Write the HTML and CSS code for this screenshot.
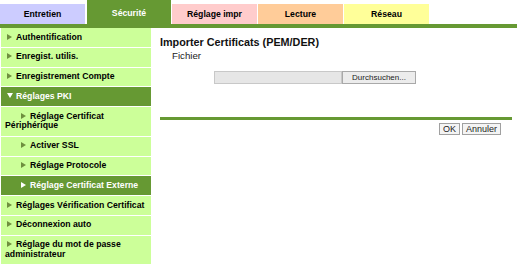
FILE: index.html
```html
<!DOCTYPE html>
<html lang="fr">
<head>
  <meta charset="UTF-8" />
  <title>Sécurité - Importer Certificats</title>
  <link rel="stylesheet" href="styles.css">
</head>
<body>
  <div class="tabs">
    <div class="tab tab-entretien">Entretien</div>
    <div class="tab tab-securite">Sécurité</div>
    <div class="tab tab-impr">Réglage impr</div>
    <div class="tab tab-lecture">Lecture</div>
    <div class="tab tab-reseau">Réseau</div>
  </div>
  <div class="band"></div>

  <div class="layout">
    <nav class="menu">
      <div class="item"><span class="arrow"></span>Authentification</div>
      <div class="item"><span class="arrow"></span>Enregist. utilis.</div>
      <div class="item"><span class="arrow"></span>Enregistrement Compte</div>
      <div class="item open"><span class="arrow-down"></span>Réglages PKI</div>
      <div class="item sub"><span class="arrow"></span>Réglage Certificat Périphérique</div>
      <div class="item sub"><span class="arrow"></span>Activer SSL</div>
      <div class="item sub"><span class="arrow"></span>Réglage Protocole</div>
      <div class="item sub current"><span class="arrow"></span>Réglage Certificat Externe</div>
      <div class="item"><span class="arrow"></span>Réglages Vérification Certificat</div>
      <div class="item"><span class="arrow"></span>Déconnexion auto</div>
      <div class="item"><span class="arrow"></span>Réglage du mot de passe administrateur</div>
    </nav>

    <main class="content">
      <h1 class="title">Importer Certificats (PEM/DER)</h1>
      <div class="label">Fichier</div>
      <div class="file-row">
        <div class="file-box"></div>
        <button class="browse">Durchsuchen...</button>
      </div>
      <div class="rule"></div>
      <div class="actions">
        <button class="btn">OK</button>
        <button class="btn">Annuler</button>
      </div>
    </main>
  </div>
</body>
</html>
```

FILE: styles.css
```css
body {
  margin: 0;
  font-family: 'Liberation Sans', Arial, sans-serif;
  background: #fff;
  color: #000;
}

/* tabs */
.tabs {
  display: flex;
  align-items: flex-end;
  gap: 1px;
  height: 24px;
}

.tab {
  width: 85px;
  height: 20px;
  line-height: 20px;
  text-align: center;
  font-size: 8.7px;
  font-weight: bold;
}

.tab-entretien { background: #ccccff; }
.tab-securite  { background: #669933; color: #fff; height: 24px; line-height: 26px; width: 84px; margin-left: 1px; }
.tab-impr      { background: #ffcccc; }
.tab-lecture   { background: #ffcc99; }
.tab-reseau    { background: #ffff99; }

.band {
  height: 4px;
  background: #669933;
}

.layout {
  display: flex;
  align-items: flex-start;
}

/* left menu */
.menu {
  width: 150px;
  padding-left: 1px;
  padding-bottom: 2px;
  border-bottom: 2px solid #669933;
  flex-shrink: 0;
}

.item {
  background: #ccff99;
  border-bottom: 1px solid #fff;
  padding: 4.5px 4px;
  line-height: 9.8px;
  font-size: 8.7px;
  font-weight: bold;
  text-indent: 2px;
}

.item.sub {
  text-indent: 16px;
}

.item.open,
.item.current {
  background: #669933;
  color: #fff;
}

.arrow {
  display: inline-block;
  width: 0;
  height: 0;
  border-top: 3.5px solid transparent;
  border-bottom: 3.5px solid transparent;
  border-left: 5px solid #6f8f3f;
  margin-right: 4px;
}

.item.current .arrow {
  border-left-color: #fff;
}

.arrow-down {
  display: inline-block;
  width: 0;
  height: 0;
  border-left: 3.5px solid transparent;
  border-right: 3.5px solid transparent;
  border-top: 5px solid #fff;
  margin-right: 3px;
  vertical-align: 1px;
}

/* main panel */
.content {
  flex: 1;
  padding: 0 5px 0 9px;
}

.title {
  margin: 8px 0 0;
  font-size: 10.8px;
  line-height: 13px;
  font-weight: bold;
  color: #111;
}

.label {
  margin: 2px 0 0 12px;
  font-size: 9.7px;
  line-height: 10px;
  color: #222;
}

.file-row {
  display: flex;
  margin: 10px 0 0 54px;
  height: 13px;
}

.file-box {
  width: 128px;
  background: #e6e6e6;
  border: 1px solid #c8c8c8;
  box-sizing: border-box;
}

.browse {
  width: 74px;
  height: 13px;
  padding: 0;
  font-family: 'Liberation Sans', Arial, sans-serif;
  font-size: 8px;
  background: #ececec;
  border: 1px solid #a9a9a9;
  color: #222;
}

.rule {
  margin-top: 33px;
  height: 3px;
  background: #669933;
}

.actions {
  display: flex;
  justify-content: flex-end;
  gap: 2px;
  margin: 3px 11px 0 0;
}

.btn {
  height: 12px;
  padding: 0 3px;
  font-family: 'Liberation Sans', Arial, sans-serif;
  font-size: 9px;
  line-height: 10px;
  background: #f4f4f4;
  border: 1px solid #a0a0a0;
  color: #222;
}
```
